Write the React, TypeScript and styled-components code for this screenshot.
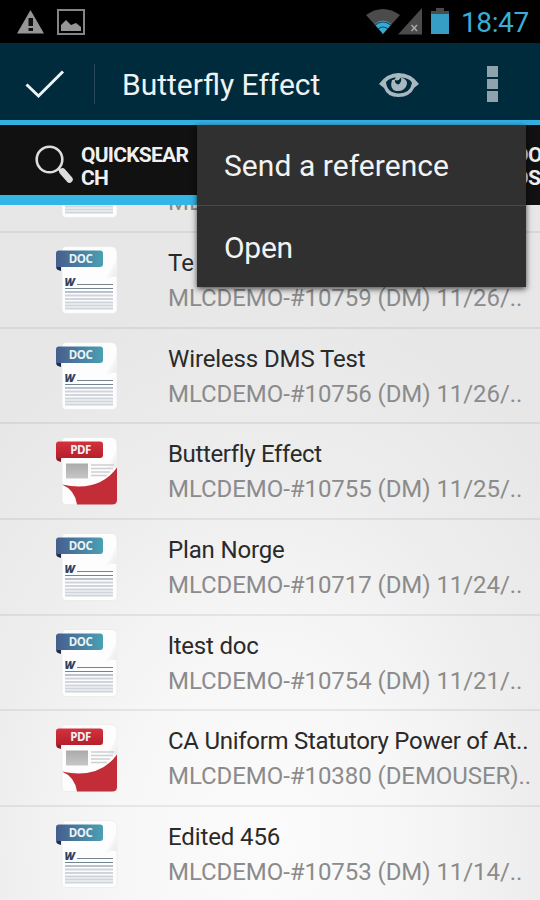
import React from "react";
import styled, { createGlobalStyle } from "styled-components";

const Global = createGlobalStyle`
  * { box-sizing: border-box; }
  html, body { margin: 0; padding: 0; background: #e8e8e8; }
  body { font-family: Roboto, "Liberation Sans", sans-serif; overflow: hidden; }
  svg { display: block; flex: none; }
`;

const Screen = styled.div`
  width: 540px;
  height: 900px;
  display: flex;
  flex-direction: column;
  overflow: hidden;
  background: radial-gradient(ellipse 400px 560px at 260px 850px, #fbfbfb 0%, #f7f7f7 35%, #ededed 70%, #e7e7e7 100%);
`;

const StatusBar = styled.header`
  height: 43px;
  flex: none;
  background: #000;
  display: flex;
  align-items: center;
  justify-content: space-between;
`;

const Clock = styled.time`
  display: block;
  width: 79px;
  font-size: 28px;
  line-height: 43px;
  letter-spacing: -0.4px;
  color: #3aaedb;
  padding-top: 2px;
`;

const StatusGroup = styled.div`
  display: flex;
  align-items: center;
  height: 43px;
`;

const ActionBar = styled.nav`
  height: 82px;
  flex: none;
  background: #002b3c;
  border-bottom: 5px solid #33b0e2;
  display: flex;
  align-items: center;
`;

const Done = styled.button`
  width: 94px;
  height: 77px;
  padding: 6px 0 0 24px;
  border: 0;
  background: none;
`;

const Divider = styled.span`
  width: 1px;
  height: 40px;
  margin-top: 4px;
  background: #29495a;
`;

const BarTitle = styled.h1`
  margin: 0 0 0 27px;
  width: 256px;
  padding-top: 6px;
  font-size: 30px;
  line-height: 36px;
  font-weight: 400;
  color: #eef2f4;
`;

const Preview = styled.span`
  padding-top: 6px;
`;

const Overflow = styled.div`
  display: grid;
  gap: 2px;
  margin: 5px 0 0 67px;
`;

const Dot = styled.i`
  width: 11px;
  height: 10.6px;
  background: #8fa3ad;
`;

const Tabs = styled.div`
  position: relative;
  height: 80px;
  flex: none;
  background: #111;
  display: flex;
  align-items: stretch;
`;

const Tab = styled.div<{ $active?: boolean }>`
  width: ${(p) => (p.$active ? 515 : 25)}px;
  padding: ${(p) => (p.$active ? "19px 0 0 34px" : "19px 0 0 0")};
  border-bottom: 10px solid ${(p) => (p.$active ? "#33b5e5" : "#111")};
  display: flex;
  align-items: flex-start;
  overflow: hidden;
`;

const TabLabel = styled.span`
  font-size: 21px;
  line-height: 22.5px;
  letter-spacing: -0.75px;
  font-weight: 700;
  color: #f0f0f0;
  white-space: pre;
`;

const Menu = styled.ul`
  position: absolute;
  z-index: 2;
  left: 197px;
  top: 0;
  width: 329px;
  height: 162px;
  margin: 0;
  padding: 0;
  list-style: none;
  background: #303030;
  box-shadow: 0 2px 6px rgba(0, 0, 0, 0.7);
`;

const MenuItem = styled.li`
  height: 80px;
  padding: 1px 27px 0;
  display: flex;
  align-items: center;
  font-size: 30px;
  letter-spacing: 0.05px;
  color: #f3f3f3;
  & + & { border-top: 1px solid #4b4b4b; padding-top: 4px; letter-spacing: -0.3px; }
`;

const List = styled.main`
  flex: 1;
  min-height: 0;
  margin-bottom: -0.7px;
  overflow: hidden;
  display: flex;
  flex-direction: column;
  justify-content: flex-end;
`;

const Row = styled.article`
  height: 95.67px;
  flex: none;
  display: flex;
  border-top: 2px solid rgba(0, 0, 0, 0.065);
  padding: 12px 0 0 52px;
`;

const RowText = styled.div`
  margin-left: 48px;
  padding-top: 1px;
`;

const Line = styled.div`
  font-size: 24px;
  line-height: 35px;
  white-space: nowrap;
`;

const Name = styled(Line)<{ $track: number }>`
  color: #2a2a2a;
  letter-spacing: ${(p) => p.$track}px;
`;

const Ref = styled(Line)`
  color: #8b8b8b;
  letter-spacing: -0.06px;
`;

function FileIcon({ kind }: { kind: "DOC" | "PDF" }) {
  const doc = kind === "DOC";
  return (
    <svg width="68" height="72" viewBox="0 0 68 72">
      <defs>
        <linearGradient id="docRibbon">
          <stop offset="0" stopColor="#465e8c" />
          <stop offset="1" stopColor="#4a9fb5" />
        </linearGradient>
        <linearGradient id="pdfRibbon" x2="0" y2="1">
          <stop offset="0" stopColor="#d3323d" />
          <stop offset="1" stopColor="#b51f2c" />
        </linearGradient>
        <linearGradient id="thumb" x2="0" y2="1">
          <stop offset="0" stopColor="#a9aaa9" />
          <stop offset="1" stopColor="#c6c7c6" />
        </linearGradient>
        <linearGradient id="fold" x2="1" y2="1">
          <stop offset="0.4" stopColor="#fcfcfc" />
          <stop offset="1" stopColor="#e8e9e9" />
        </linearGradient>
      </defs>
      <path
        d="M15 1.500H59Q65 1.500 65 8V64Q65 68.500 60 68.500H15Q10 68.500 10 64V6Q10 1.500 15 1.500Z"
        fill="#fdfdfd"
        stroke="#e6e6e6"
        strokeWidth=".6"
      />
      <path d="M64.700 12Q61 24 53 34Q60 31 64.700 32Z" fill="url(#fold)" />
      {doc ? (
        <g>
          <text x="12.500" y="40.500" fontFamily="Open Sans" fontSize="11" fontWeight="800" fontStyle="italic" fill="#30405f">W</text>
          <path d="M25 39.5H61M13 43.5H61" stroke="#75858f" strokeWidth="1.2" />
          <path d="M13 47H61" stroke="#a4abba" strokeWidth="1.3" />
          <path d="M13 50.5H61M13 54H61M13 57.500H61M13 60.5H61M13 63.500H61" stroke="#d0d4dc" strokeWidth="1.8" />
        </g>
      ) : (
        <g>
          <rect x="14" y="27.500" width="22" height="15" fill="url(#thumb)" />
          <path d="M39 29H62M39 32.5H61M39 36H58M39 39.5H55" stroke="#cdcfd0" strokeWidth="1.3" />
          <path d="M10 48.500Q47 56.500 65 31.500V64Q65 68.500 60 68.500H25Q23 54 10 48.500Z" fill="#c22d38" />
        </g>
      )}
      <path d="M4 8L9 22V26L6 25Q4 24 4 21Z" fill={doc ? "#1f2c4c" : "#891c26"} />
      <path d="M7 5.500H48Q51 5.500 51 8.500V19Q51 22 48 22H4V8.500Q4 5.500 7 5.500Z" fill={doc ? "url(#docRibbon)" : "url(#pdfRibbon)"} />
      <text x="28.500" y="17.500" textAnchor="middle" fontFamily="Open Sans" fontSize="11.500" fontWeight="700" letterSpacing="-.5" fill="#eef2f4">
        {kind}
      </text>
    </svg>
  );
}

const files: { kind: "DOC" | "PDF"; name: string; ref: string; track: number }[] = [
  { kind: "DOC", name: "Te", ref: "MLCDEMO-#10760 (DM) 11/26/..", track: 0 },
  { kind: "DOC", name: "Te", ref: "MLCDEMO-#10759 (DM) 11/26/..", track: 0 },
  { kind: "DOC", name: "Wireless DMS Test", ref: "MLCDEMO-#10756 (DM) 11/26/..", track: -0.12 },
  { kind: "PDF", name: "Butterfly Effect", ref: "MLCDEMO-#10755 (DM) 11/25/..", track: -0.35 },
  { kind: "DOC", name: "Plan Norge", ref: "MLCDEMO-#10717 (DM) 11/24/..", track: -0.15 },
  { kind: "DOC", name: "ltest doc", ref: "MLCDEMO-#10754 (DM) 11/21/..", track: -0.2 },
  { kind: "PDF", name: "CA Uniform Statutory Power of At..", ref: "MLCDEMO-#10380 (DEMOUSER)..", track: -0.28 },
  { kind: "DOC", name: "Edited 456", ref: "MLCDEMO-#10753 (DM) 11/14/..", track: -0.12 },
];

export default function App() {
  return (
    <>
      <Global />
      <Screen>
        <StatusBar>
          <StatusGroup>
            <svg width="90" height="43" viewBox="0 0 90 43">
              <path d="M30.500 10L44 33.500H17Z" fill="#969696" />
              <path d="M28.500 18H33V26H28.500ZM28.500 28H33V31H28.500Z" fill="#111" />
              <rect x="58" y="10" width="26" height="24" fill="none" stroke="#858585" strokeWidth="2" />
              <path d="M61 31V25L66 20L71 25L76 23L81 27V31Z" fill="#969696" />
            </svg>
          </StatusGroup>
          <StatusGroup>
            <svg width="96" height="43" viewBox="365 0 96 43">
              <path d="M366 15Q383 3 400 15L383 34Z" fill="#4b4b4b" />
              <path d="M374.500 24Q383 17 391.500 24L383 34Z" fill="#36a9d5" />
              <path d="M375 25Q383 19 391 25M378 29Q383 25 388 29" fill="none" stroke="#174c60" strokeWidth="1.200" />
              <path d="M422 8V34.500H398Z" fill="#4b4b4b" />
              <path d="M411.500 25L417 31M417 25L411.500 31" stroke="#aaa" strokeWidth="1.500" />
              <path d="M436 8H444V11H449V15H431V11H436Z" fill="#4b4b4b" />
              <path d="M431 14H449V34H431Z" fill="#369dc4" />
            </svg>
            <Clock>18:47</Clock>
          </StatusGroup>
        </StatusBar>

        <ActionBar>
          <Done aria-label="Done">
            <svg width="42" height="34" viewBox="24 68 42 34">
              <path d="M26.500 84.500L38.500 96L63 71.500" fill="none" stroke="#eff3f5" strokeWidth="3" />
            </svg>
          </Done>
          <Divider />
          <BarTitle>Butterfly Effect</BarTitle>
          <Preview>
            <svg width="42" height="28" viewBox="378 71 42 28">
              <path d="M379 84Q387 73 398.500 73Q411 73 419 84L414.500 87.500Q410 97 398.500 97Q387 97 384 88Z" fill="#a9b7be" />
              <path d="M386 82Q390 77.500 396 77.500L394.500 79.500Q398 82 401 77.500Q410 78 412 83Q410 93.500 399 93.500Q387 93 386 82Z" fill="#002b3c" />
              <path d="M392 80Q389 89 396 91Q405 92 407 84Q407.500 79 401 77.500Q402 82 398.500 84.500Q394.500 84 395 79.500Z" fill="#a9b7be" />
            </svg>
          </Preview>
          <Overflow><Dot /><Dot /><Dot /></Overflow>
        </ActionBar>

        <Tabs>
          <Tab $active>
            <svg width="47" height="44" viewBox="34 144 47 44">
              <circle cx="49.500" cy="159.500" r="12.800" fill="none" stroke="#ddd" strokeWidth="2.600" />
              <path d="M58 168L61 171" stroke="#ddd" strokeWidth="3" />
              <path d="M62.500 171.500L69.500 179.500" stroke="#ddd" strokeWidth="6.500" strokeLinecap="round" />
            </svg>
            <TabLabel>{"QUICKSEAR\nCH"}</TabLabel>
          </Tab>
          <Tab><TabLabel>{"DO\nDS"}</TabLabel></Tab>
          <Menu>
            <MenuItem>Send a reference</MenuItem>
            <MenuItem>Open</MenuItem>
          </Menu>
        </Tabs>

        <List>
          {files.map((f) => (
            <Row key={f.ref}>
              <FileIcon kind={f.kind} />
              <RowText>
                <Name $track={f.track}>{f.name}</Name>
                <Ref>{f.ref}</Ref>
              </RowText>
            </Row>
          ))}
        </List>
      </Screen>
    </>
  );
}
